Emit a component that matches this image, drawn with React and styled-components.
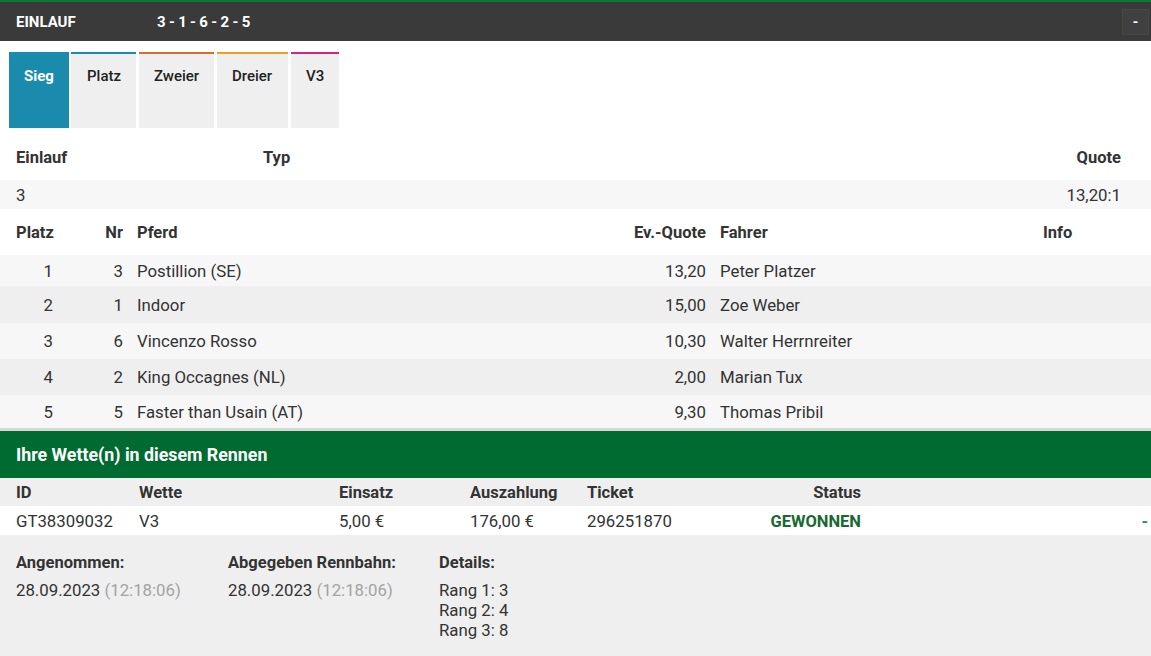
import React from "react";
import styled, { createGlobalStyle } from "styled-components";

const Global = createGlobalStyle`
  html, body { margin: 0; padding: 0; background: #fff; }
  body { font-family: Roboto, "Liberation Sans", Arial, sans-serif; color: #333; font-size: 16.8px; }
  * { box-sizing: border-box; }
`;

const Page = styled.div`
  width: 1151px;
  min-height: 656px;
  background: #fff;
`;

const TopBar = styled.div`
  display: flex;
  align-items: center;
  height: 41px;
  background: #3a3a3a;
  border-top: 2px solid #0c7a32;
  padding: 0 2px 0 16px;
  color: #fff;
  font-size: 15px;
  font-weight: 700;
`;

const TopTitle = styled.div`
  width: 141px;
`;

const TopResult = styled.div`
  flex: 1;
  letter-spacing: -0.2px;
`;

const CollapseBtn = styled.button`
  width: 27px;
  height: 26px;
  background: #404040;
  border: 1px solid #474747;
  color: #fff;
  font-family: inherit;
  font-size: 14px;
  font-weight: 700;
  padding: 0;
  line-height: 1;
`;

const Tabs = styled.div`
  display: flex;
  gap: 3px;
  padding: 11px 9px 0;
`;

const Tab = styled.div`
  width: ${(p) => p.$w}px;
  height: 76px;
  padding: 13px 0 0 ${(p) => p.$pl}px;
  border-top: 2px solid ${(p) => p.$accent};
  background: ${(p) => (p.$active ? p.$accent : "#efefef")};
  color: ${(p) => (p.$active ? "#fff" : "#222")};
  font-size: 15px;
  font-weight: ${(p) => (p.$active ? 700 : 500)};
  line-height: 18px;
`;

const SummaryRow = styled.div`
  display: grid;
  grid-template-columns: 256px 1fr 200px;
  align-items: center;
  height: ${(p) => p.$h}px;
  padding-top: ${(p) => p.$pt || 0}px;
  background: ${(p) => p.$bg || "#fff"};
  font-weight: ${(p) => (p.$head ? 700 : 400)};
  font-size: ${(p) => (p.$head ? "16.5px" : "16.8px")};
`;

const SumCell = styled.div`
  padding: ${(p) => (p.$right ? "0 30px 0 0" : p.$first ? "0 0 0 16px" : "0 0 0 7px")};
  text-align: ${(p) => (p.$right ? "right" : "left")};
`;

const HorseRow = styled.div`
  display: grid;
  grid-template-columns: 61px 69px 430px 153px 323px 1fr;
  align-items: center;
  height: ${(p) => p.$h}px;
  background: ${(p) => p.$bg || "#fff"};
  font-weight: ${(p) => (p.$head ? 700 : 400)};
  font-size: ${(p) => (p.$head ? "16.5px" : "16.8px")};
`;

const Cell = styled.div`
  white-space: nowrap;
  padding: ${(p) => p.$pad || "0 7px"};
  text-align: ${(p) => (p.$right ? "right" : "left")};
`;

const Divider = styled.div`
  height: 3px;
  background: #d3d8d4;
`;

const GreenBar = styled.div`
  height: 47px;
  display: flex;
  align-items: center;
  padding-left: 16px;
  background: #006b30;
  color: #fff;
  font-size: 17.8px;
  font-weight: 700;
`;

const BetRow = styled.div`
  display: grid;
  grid-template-columns: 132px 200px 131px 117px 118px 170px 1fr;
  align-items: center;
  height: ${(p) => p.$h}px;
  padding-top: ${(p) => p.$pt || 0}px;
  background: ${(p) => p.$bg};
  font-weight: ${(p) => (p.$head ? 700 : 400)};
  font-size: ${(p) => (p.$head ? "16.5px" : "16.8px")};
`;

const Status = styled.span`
  color: #17692f;
  font-weight: 700;
  font-size: 16.5px;
`;

const Dash = styled.span`
  color: #1f9a3d;
  font-weight: 700;
`;

const Details = styled.div`
  display: grid;
  grid-template-columns: 212px 211px 1fr;
  padding: 19px 16px 20px;
  background: #efefef;
  min-height: 121px;
`;

const DetailCol = styled.div`
  display: flex;
  flex-direction: column;
`;

const DetailLabel = styled.div`
  font-weight: 700;
  font-size: 16.5px;
  line-height: 18px;
  margin-bottom: 8px;
`;

const DetailValue = styled.div`
  font-size: 16.8px;
  line-height: 20px;
`;

const Time = styled.span`
  color: #a3a3a3;
`;

const tabs = [
  { label: "Sieg", accent: "#1a8aad", active: true, w: 60, pl: 15 },
  { label: "Platz", accent: "#1a8aad", w: 65, pl: 16 },
  { label: "Zweier", accent: "#d4702a", w: 75, pl: 15 },
  { label: "Dreier", accent: "#e8a31e", w: 71, pl: 15 },
  { label: "V3", accent: "#d1267e", w: 48, pl: 15 },
];

const horses = [
  ["1", "3", "Postillion (SE)", "13,20", "Peter Platzer"],
  ["2", "1", "Indoor", "15,00", "Zoe Weber"],
  ["3", "6", "Vincenzo Rosso", "10,30", "Walter Herrnreiter"],
  ["4", "2", "King Occagnes (NL)", "2,00", "Marian Tux"],
  ["5", "5", "Faster than Usain (AT)", "9,30", "Thomas Pribil"],
];

const rowHeights = [31, 37, 36, 36, 33];

export default function App() {
  return (
    <Page>
      <Global />
      <TopBar>
        <TopTitle>EINLAUF</TopTitle>
        <TopResult>3 - 1 - 6 - 2 - 5</TopResult>
        <CollapseBtn>-</CollapseBtn>
      </TopBar>
      <Tabs>
        {tabs.map((t, i) => (
          <Tab
            key={t.label}
            $accent={t.accent}
            $active={t.active}
            $w={t.w}
            $pl={t.pl}
            style={i === 0 ? { marginRight: -1 } : undefined}
          >
            {t.label}
          </Tab>
        ))}
      </Tabs>
      <SummaryRow $h={52} $pt={7} $head>
        <SumCell $first>Einlauf</SumCell>
        <SumCell>Typ</SumCell>
        <SumCell $right>Quote</SumCell>
      </SummaryRow>
      <SummaryRow $h={29} $bg="#f7f7f7">
        <SumCell $first>3</SumCell>
        <SumCell></SumCell>
        <SumCell $right>13,20:1</SumCell>
      </SummaryRow>
      <HorseRow $h={46} $head>
        <Cell $pad="0 0 0 16px">Platz</Cell>
        <Cell $right>Nr</Cell>
        <Cell>Pferd</Cell>
        <Cell $right>Ev.-Quote</Cell>
        <Cell>Fahrer</Cell>
        <Cell>Info</Cell>
      </HorseRow>
      {horses.map((h, i) => (
        <HorseRow key={h[0]} $h={rowHeights[i]} $bg={i % 2 ? "#efefef" : "#f7f7f7"}>
          <Cell $right $pad="0 8px 0 0">{h[0]}</Cell>
          <Cell $right>{h[1]}</Cell>
          <Cell>{h[2]}</Cell>
          <Cell $right>{h[3]}</Cell>
          <Cell>{h[4]}</Cell>
          <Cell></Cell>
        </HorseRow>
      ))}
      <Divider />
      <GreenBar>Ihre Wette(n) in diesem Rennen</GreenBar>
      <BetRow $h={28} $pt={1} $bg="#efefef" $head>
        <Cell $pad="0 0 0 16px">ID</Cell>
        <Cell>Wette</Cell>
        <Cell>Einsatz</Cell>
        <Cell>Auszahlung</Cell>
        <Cell>Ticket</Cell>
        <Cell $right>Status</Cell>
        <Cell></Cell>
      </BetRow>
      <BetRow $h={29} $bg="#fff">
        <Cell $pad="0 0 0 16px">GT38309032</Cell>
        <Cell>V3</Cell>
        <Cell>5,00 €</Cell>
        <Cell>176,00 €</Cell>
        <Cell>296251870</Cell>
        <Cell $right>
          <Status>GEWONNEN</Status>
        </Cell>
        <Cell $right $pad="0 3px 0 0">
          <Dash>-</Dash>
        </Cell>
      </BetRow>
      <Details>
        <DetailCol>
          <DetailLabel>Angenommen:</DetailLabel>
          <DetailValue>
            28.09.2023 <Time>(12:18:06)</Time>
          </DetailValue>
        </DetailCol>
        <DetailCol>
          <DetailLabel>Abgegeben Rennbahn:</DetailLabel>
          <DetailValue>
            28.09.2023 <Time>(12:18:06)</Time>
          </DetailValue>
        </DetailCol>
        <DetailCol>
          <DetailLabel>Details:</DetailLabel>
          <DetailValue>Rang 1: 3</DetailValue>
          <DetailValue>Rang 2: 4</DetailValue>
          <DetailValue>Rang 3: 8</DetailValue>
        </DetailCol>
      </Details>
    </Page>
  );
}
